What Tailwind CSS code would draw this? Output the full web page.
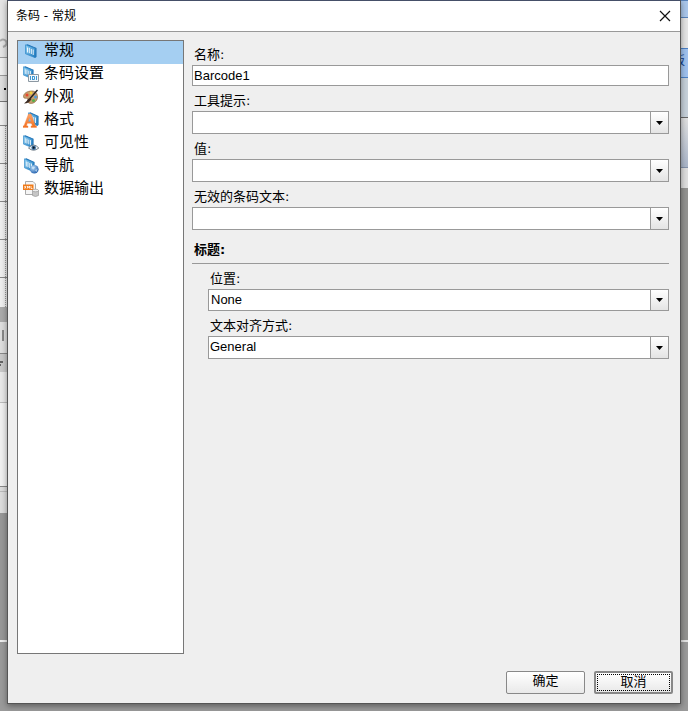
<!DOCTYPE html>
<html lang="zh-CN">
<head>
<meta charset="utf-8">
<title>条码 - 常规</title>
<script src="https://cdn.jsdelivr.net/npm/@tailwindcss/browser@4"></script>
</head>
<body class="relative min-h-screen flex flex-col overflow-hidden bg-[#9a9a9a] text-black text-[13px] leading-5 font-['DejaVu_Sans','Noto_Sans_CJK_SC',sans-serif]">

<svg class="absolute size-0" aria-hidden="true">
  <defs>
    <linearGradient id="blue" x1="0" y1="0" x2="1" y2="1"><stop offset="0" stop-color="#8fd0f4"/><stop offset="1" stop-color="#1c78bd"/></linearGradient>
    <linearGradient id="orange" x1="0" y1="0" x2="0" y2="1"><stop offset="0" stop-color="#ffa468"/><stop offset="1" stop-color="#f2701d"/></linearGradient>
    <radialGradient id="globe" cx=".35" cy=".3" r=".8"><stop offset="0" stop-color="#b9dcf8"/><stop offset="1" stop-color="#1757a8"/></radialGradient>
    <symbol id="tile" viewBox="0 0 12 14" preserveAspectRatio="none">
      <path d="M1 1 2.500 .3 11.500 4V13L10 13.700Z" fill="#1b6cb0"/>
      <path d="M.5 .8 10.200 4.300V13.700L.5 9.800Z" fill="url(#blue)" stroke="#2f88c8" stroke-width=".7"/>
      <path d="M2.500 3.500V8.500M4.300 4V9.200M6.300 5V10M8.200 5.500V11" stroke="#fff" stroke-width=".9"/>
    </symbol>
  </defs>
</svg>

<!-- Designer window behind the dialog -->
<div class="absolute inset-y-0 left-0 w-2 flex flex-col" aria-hidden="true">
  <div class="h-[58px] bg-[#e4e4e4] border-b border-[#999] pt-9"><svg class="w-2 h-4" viewBox="0 0 8 16" fill="none" stroke="#aaa" stroke-width="2"><path d="M0 5q3-3 6 0 2 4-3 6"/></svg></div>
  <div class="h-[18px] bg-[#eee] border-b border-[#999]"></div>
  <div class="h-[26px] bg-[#dedede] border-b border-[#777] pt-3 pl-1"><div class="size-[2px] bg-black"></div></div>
  <div class="h-6 bg-[#efefef] border-b border-[#888]"></div>
  <div class="h-[38px] bg-[#efefef] border-b border-[#888] pl-[5px]"><div class="h-full border-l border-dotted border-[#999]"></div></div>
  <div class="h-[38px] bg-[#efefef] border-b border-[#888] pl-[5px]"><div class="h-full border-l border-dotted border-[#999]"></div></div>
  <div class="h-[38px] bg-[#efefef] border-b border-[#888] pl-[5px]"><div class="h-full border-l border-dotted border-[#999]"></div></div>
  <div class="h-[38px] bg-[#efefef] border-b border-[#888] pl-[5px]"><div class="h-full border-l border-dotted border-[#999]"></div></div>
  <div class="h-[29px] bg-[#efefef] pl-[5px]"><div class="h-full border-l border-dotted border-[#999]"></div></div>
  <div class="h-[15px] bg-[#aaa]"></div>
  <div class="h-8 bg-[#dedede] border-b border-[#888] pt-2 pl-[2px]"><div class="w-[2px] h-[11px] bg-[#888]"></div></div>
  <div class="h-[18px] bg-[#c8c8c8] pt-[6px]"><svg class="w-3 h-2" viewBox="0 0 12 8"><path d="M0 2H3M0 5H1" stroke="#000"/></svg></div>
  <div class="h-[31px] bg-[#e8e8e8] border-b border-[#bbb]"></div>
  <div class="h-[84px] bg-[#f0f0f0] border-b border-[#888]"></div>
  <div class="h-[26px] bg-[#dcdcdc] pt-[4px]"><div class="border-t border-[#bbb]"></div></div>
  <div class="h-[129px] bg-[#979797] border-b-2 border-[#eee]"></div>
</div>
<div class="absolute inset-y-0 right-0 w-2 flex flex-col" aria-hidden="true">
  <div class="h-[18px] bg-[#a9c6ea] border-y border-[#5680b8]"></div>
  <div class="h-[30px] bg-[#e4e4e4]"></div>
  <div class="h-[30px] bg-[#9fc1ee] border-y border-[#4a7fc4] pt-[2px] pr-[3px] text-[12px] text-[#123f90] flex justify-end"><span>板</span></div>
  <div class="h-10 bg-[#c6d0d9] border-b border-[#666]"></div>
  <div class="h-[50px] bg-linear-to-b from-[#e0e0e0] to-[#a9b5c8] border-b border-[#8290a8]"></div>
  <div class="h-5 bg-[#dedede]"></div>
  <div class="h-[454px] bg-[#929290] border-b-2 border-[#e4e4e4]"></div>
</div>

<main role="dialog" aria-labelledby="dialog-title" class="relative grow mx-[7px] mb-[7px] flex flex-col bg-[#efefef] border border-[#555] border-t-[#454f68] shadow-[0_2px_6px_#0006]">
  <header class="h-[31px] flex items-center justify-between bg-white border-b border-[#999] pl-2 pr-[9px]">
    <h1 id="dialog-title" class="text-[12px]">条码 - 常规</h1>
    <button type="button" aria-label="关闭" class="size-3"><svg class="size-3" viewBox="0 0 12 12" stroke="#111" stroke-width="1.200"><path d="M1 1 11 11M11 1 1 11"/></svg></button>
  </header>

  <div class="grow flex gap-2 pt-2 pl-[9px] pr-[11px]">
    <nav aria-label="类别" class="w-[167px] shrink-0 bg-white border border-[#777]">
      <ul class="text-[15px] *:h-[23px]">
        <li><a href="#general" aria-current="page" class="h-full flex gap-[5px] pl-[5px] bg-[#a5cff2]"><svg class="size-4 mt-[2px]" viewBox="0 0 16 16"><use href="#tile" x="2" y="1" width="12" height="14"/></svg><span class="leading-[18px]">常规</span></a></li>
        <li><a href="#barcode" class="h-full flex gap-[5px] pl-[5px]"><svg class="size-4 mt-[2px]" viewBox="0 0 16 16"><use href="#tile" x="0" y="0" width="11" height="13"/><path d="M5.500 8.500H15.500V15.500H5.500Z" fill="#f4f8fb" stroke="#8c98a2"/><path d="M7.500 10V14M9.500 10V14M13.500 10V14M9.500 10.500H11.500V13.500H9.500" fill="none" stroke="#3f97d2"/></svg><span class="leading-[18px]">条码设置</span></a></li>
        <li><a href="#appearance" class="h-full flex gap-[5px] pl-[5px]"><svg class="size-4 mt-[2px]" viewBox="0 0 16 16"><path d="M9 2C4 2 .5 4.500 .5 7.500 .5 10 3 9 4.500 9.500 6 10 3.500 12.500 6 14 9 15.500 14.500 13 14.500 8 14.500 4 12 2 9 2Z" fill="#c79d6e" stroke="#8d663c" stroke-width=".7"/><circle cx="4" cy="6" r="1.500" fill="#e8472c"/><circle cx="8" cy="4" r="1.400" fill="#f2d13b"/><circle cx="12.500" cy="8" r="1.500" fill="#4e9bdc"/><circle cx="10.500" cy="11.500" r="1.600" fill="#56b04c"/><path d="M14.500 1 7 9.500" stroke="#222" stroke-width="1.400"/><path d="M7.500 8.500 8.500 10Q6 14.500 1 14.500 4 12.500 5 10Z" fill="#3b2a22"/></svg><span class="leading-[18px]">外观</span></a></li>
        <li><a href="#format" class="h-full flex gap-[5px] pl-[5px]"><svg class="size-4 mt-[2px]" viewBox="0 0 16 16"><use href="#tile" x="5" y="0" width="11" height="14"/><path fill-rule="evenodd" d="M0 15.500V14L1 13.700 5.500 2H8L12.500 13.700 13.500 14V15.500H8V14L9.300 13.700 8.500 11.300H4.300L3.500 13.700 5 14V15.500ZM5 9.800H8L6.500 5.500Z" fill="url(#orange)" stroke="#f5874a" stroke-width=".4"/></svg><span class="leading-[18px]">格式</span></a></li>
        <li><a href="#visibility" class="h-full flex gap-[5px] pl-[5px]"><svg class="size-4 mt-[2px]" viewBox="0 0 16 16"><use href="#tile" x="0" y="0" width="11" height="13"/><path d="M5.500 13Q10.500 7 15.800 13 10.500 17.500 5.500 13Z" fill="#eef3f7" stroke="#68747e" stroke-width=".9"/><circle cx="10.700" cy="12.700" r="2.300" fill="#3f6f9e"/><circle cx="10.700" cy="12.700" r="1.100" fill="#061522"/></svg><span class="leading-[18px]">可见性</span></a></li>
        <li><a href="#navigation" class="h-full flex gap-[5px] pl-[5px]"><svg class="size-4 mt-[2px]" viewBox="0 0 16 16"><use href="#tile" x="1" y="0" width="11" height="14"/><circle cx="11.300" cy="11.300" r="4.300" fill="url(#globe)"/><path d="M8.500 10Q10 8 12 9L10.500 11.500ZM12 12 14.500 11 13.500 14Z" fill="#d5ebfb" opacity=".7"/></svg><span class="leading-[18px]">导航</span></a></li>
        <li><a href="#output" class="h-full flex gap-[5px] pl-[5px]"><svg class="size-4 mt-[2px]" viewBox="0 0 16 16"><path d="M2.500 .5H10L12.500 3V13.500H2.500Z" fill="#f5f5f5" stroke="#aaa"/><path d="M0 3.500H10.500V9H0Z" fill="#f07a18"/><path d="M1.500 5 3 7.500M3 5 1.500 7.500M4.500 7.500V5L5.500 6.500 6.500 5V7.500M8 5V7.500H9.500" fill="none" stroke="#fff" stroke-width=".8"/><path d="M9.500 9.500V14.500Q12.500 16.500 15.500 14.500V9.500Z" fill="#c6c6c6" stroke="#999" stroke-width=".7"/><ellipse cx="12.500" cy="9.500" rx="3" ry="1.300" fill="#eee" stroke="#999" stroke-width=".7"/></svg><span class="leading-[18px]">数据输出</span></a></li>
      </ul>
    </nav>

    <form id="settings" class="grow min-w-0 flex flex-col">
      <label for="name" class="mt-[5px] pl-[2px]">名称:</label>
      <input id="name" type="text" value="Barcode1" class="h-[21px] border border-[#999] bg-white px-px pb-px font-['Liberation_Sans',sans-serif]">

      <label for="tooltip" class="mt-[5px] pl-[2px]">工具提示:</label>
      <div class="flex h-[23px] border border-[#999] bg-white">
        <input id="tooltip" type="text" class="grow min-w-0 px-px font-['Liberation_Sans',sans-serif]">
        <button type="button" aria-label="工具提示选项" class="w-[18px] grid place-items-center border-l border-[#999] bg-linear-to-b from-white to-[#e4e4e4]"><svg class="w-[7px] h-1" viewBox="0 0 7 4"><path d="M0 0H7L3.500 4Z"/></svg></button>
      </div>

      <label for="value" class="mt-[5px] pl-[2px]">值:</label>
      <div class="flex h-[23px] border border-[#999] bg-white">
        <input id="value" type="text" class="grow min-w-0 px-px font-['Liberation_Sans',sans-serif]">
        <button type="button" aria-label="值选项" class="w-[18px] grid place-items-center border-l border-[#999] bg-linear-to-b from-white to-[#e4e4e4]"><svg class="w-[7px] h-1" viewBox="0 0 7 4"><path d="M0 0H7L3.500 4Z"/></svg></button>
      </div>

      <label for="invalid" class="mt-[5px] pl-[2px]">无效的条码文本:</label>
      <div class="flex h-[23px] border border-[#999] bg-white">
        <input id="invalid" type="text" class="grow min-w-0 px-px font-['Liberation_Sans',sans-serif]">
        <button type="button" aria-label="无效的条码文本选项" class="w-[18px] grid place-items-center border-l border-[#999] bg-linear-to-b from-white to-[#e4e4e4]"><svg class="w-[7px] h-1" viewBox="0 0 7 4"><path d="M0 0H7L3.500 4Z"/></svg></button>
      </div>

      <h2 class="mt-[10px] pl-[2px] pb-[3px] font-bold border-b border-[#999]">标题:</h2>
      <div class="pl-4 flex flex-col">
        <label for="position" class="mt-[5px] pl-[2px]">位置:</label>
        <div class="grid h-[22px] border border-[#999] bg-white">
          <select id="position" class="col-start-1 row-start-1 appearance-none px-[2px] font-['Liberation_Sans',sans-serif]"><option>None</option></select>
          <span class="col-start-1 row-start-1 justify-self-end pointer-events-none w-[18px] grid place-items-center border-l border-[#999] bg-linear-to-b from-white to-[#e4e4e4]"><svg class="w-[7px] h-1" viewBox="0 0 7 4"><path d="M0 0H7L3.500 4Z"/></svg></span>
        </div>
        <label for="align" class="mt-[5px] pl-[2px]">文本对齐方式:</label>
        <div class="grid h-[23px] border border-[#999] bg-white">
          <select id="align" class="col-start-1 row-start-1 appearance-none px-px pb-px font-['Liberation_Sans',sans-serif]"><option>General</option></select>
          <span class="col-start-1 row-start-1 justify-self-end pointer-events-none w-[18px] grid place-items-center border-l border-[#999] bg-linear-to-b from-white to-[#e4e4e4]"><svg class="w-[7px] h-1" viewBox="0 0 7 4"><path d="M0 0H7L3.500 4Z"/></svg></span>
        </div>
      </div>
    </form>
  </div>

  <footer class="flex justify-end gap-[9px] pt-[17px] pb-[9px] pr-[7px]">
    <button type="submit" form="settings" class="w-[79px] h-[23px] pb-1 border border-[#888] rounded-[2px] bg-linear-to-b from-white to-[#e9e9e9] leading-4">确定</button>
    <button type="button" class="w-[79px] h-[23px] p-px border-2 border-[#888] rounded-[2px] bg-linear-to-b from-white to-[#e9e9e9] leading-[13px]"><span class="block h-full border border-dotted border-black">取消</span></button>
  </footer>
</main>
</body>
</html>
